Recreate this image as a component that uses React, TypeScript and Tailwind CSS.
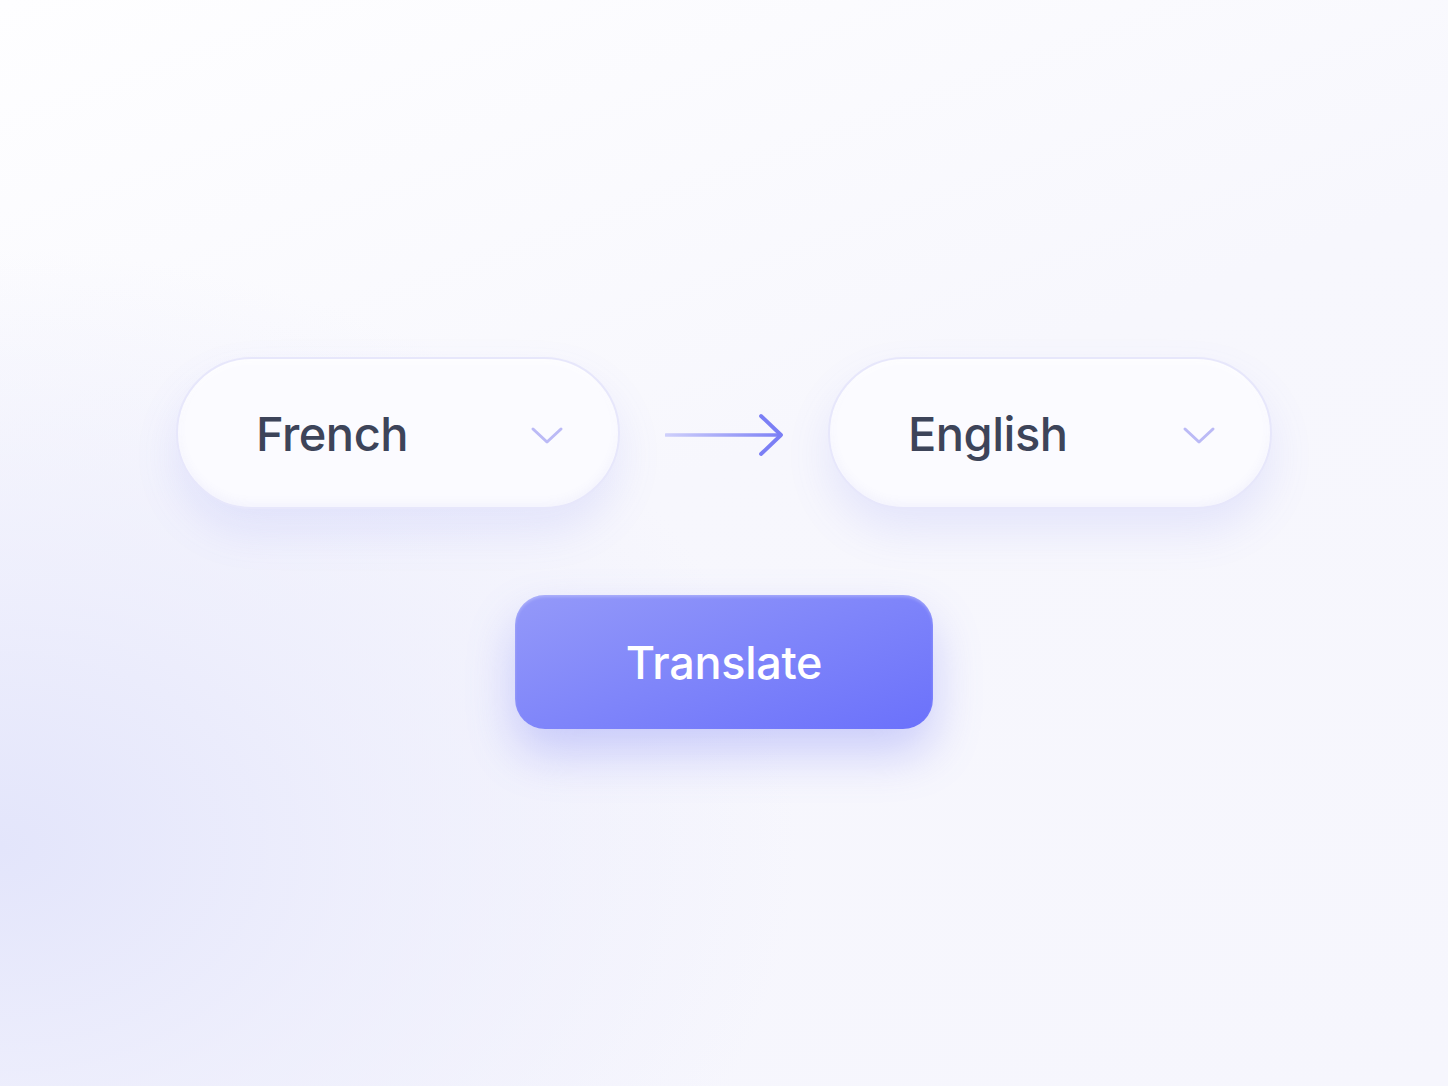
function Chevron() {
  return (
    <svg width="34" height="20" viewBox="0 0 34 20" fill="none" className="mt-[6px]">
      <path d="M3 3L17 16L31 3" stroke="#bbbaf6" strokeWidth="3" strokeLinecap="round" strokeLinejoin="round" />
    </svg>
  )
}

function LanguagePill({ label }: { label: string }) {
  return (
    <div className="flex h-[152px] w-[444px] items-center justify-between rounded-full border-2 border-[#e7e7fb] bg-[#fbfbff] pl-[78px] pr-[54px] shadow-[0_22px_44px_rgba(110,114,240,0.13),inset_0_-4px_10px_rgba(120,120,220,0.06),inset_0_3px_6px_rgba(255,255,255,0.9)]">
      <span className="text-[47px] font-medium leading-none tracking-[-0.5px] text-[#3d4459]">{label}</span>
      <Chevron />
    </div>
  )
}

function Arrow() {
  return (
    <svg width="118" height="46" viewBox="0 0 118 46" fill="none" className="mt-[4px]">
      <defs>
        <linearGradient id="arrowLine" x1="0" y1="0" x2="118" y2="0" gradientUnits="userSpaceOnUse">
          <stop offset="0" stopColor="#cfd0fb" />
          <stop offset="1" stopColor="#7b7ff5" />
        </linearGradient>
      </defs>
      <path d="M1 23H114" stroke="url(#arrowLine)" strokeWidth="3.4" strokeLinecap="round" />
      <path d="M96 4L116 23L96 42" stroke="#7b7ff5" strokeWidth="3.8" strokeLinecap="round" strokeLinejoin="round" />
    </svg>
  )
}

export default function App() {
  return (
    <div
      className="flex h-[1086px] w-full flex-col items-center justify-center overflow-hidden bg-[radial-gradient(ellipse_55%_55%_at_0%_78%,#e3e5fb_0%,rgba(234,235,252,0.7)_45%,rgba(247,247,253,0)_100%),linear-gradient(160deg,#fefeff_0%,#f7f7fd_45%,#f6f6fd_100%)]"
      style={{ fontFamily: "Inter, 'Noto Sans', sans-serif" }}
    >
      <div className="flex items-center gap-[45px]">
        <LanguagePill label="French" />
        <Arrow />
        <LanguagePill label="English" />
      </div>
      <button className="mt-[86px] flex h-[134px] w-[418px] items-center justify-center rounded-[30px] bg-[linear-gradient(160deg,#9499f9_0%,#7f85fa_50%,#6b71fb_100%)] shadow-[0_24px_48px_rgba(108,114,245,0.32),inset_0_2px_3px_rgba(255,255,255,0.25)]">
        <span className="text-[45px] font-medium leading-none tracking-[-0.3px] text-white">Translate</span>
      </button>
    </div>
  )
}
